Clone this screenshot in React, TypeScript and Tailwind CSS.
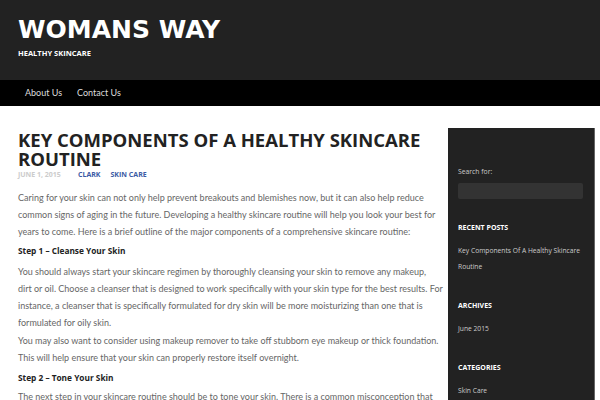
const paragraphs: { kind: "p" | "h"; lines: string[] }[] = [
  {
    kind: "p",
    lines: [
      "Caring for your skin can not only help prevent breakouts and blemishes now, but it can also help reduce",
      "common signs of aging in the future. Developing a healthy skincare routine will help you look your best for",
      "years to come. Here is a brief outline of the major components of a comprehensive skincare routine:",
    ],
  },
  { kind: "h", lines: ["Step 1 – Cleanse Your Skin"] },
  {
    kind: "p",
    lines: [
      "You should always start your skincare regimen by thoroughly cleansing your skin to remove any makeup,",
      "dirt or oil. Choose a cleanser that is designed to work specifically with your skin type for the best results. For",
      "instance, a cleanser that is specifically formulated for dry skin will be more moisturizing than one that is",
      "formulated for oily skin.",
    ],
  },
  {
    kind: "p",
    lines: [
      "You may also want to consider using makeup remover to take off stubborn eye makeup or thick foundation.",
      "This will help ensure that your skin can properly restore itself overnight.",
    ],
  },
  { kind: "h", lines: ["Step 2 – Tone Your Skin"] },
  {
    kind: "p",
    lines: [
      "The next step in your skincare routine should be to tone your skin. There is a common misconception that",
      "toners are only for oily skin.",
    ],
  },
];

export default function App() {
  const body = { fontFamily: "Lato, 'Liberation Sans', sans-serif" };
  const head = { fontFamily: "'DejaVu Sans', sans-serif" };
  const bold = { fontFamily: "'Open Sans', 'DejaVu Sans', sans-serif" };

  return (
    <div className="w-[600px] h-[400px] overflow-hidden bg-white">
      <header className="bg-[#222222] h-[80px] px-[18px] pt-[17px]">
        <h1 className="text-white font-bold text-[25px] leading-[25px]" style={head}>
          WOMANS WAY
        </h1>
        <p className="mt-[6px] text-white font-bold text-[7.5px] leading-[10px]" style={bold}>
          HEALTHY SKINCARE
        </p>
      </header>

      <nav className="bg-black h-[26px] flex items-center gap-[15px] px-[25px] text-[9px] text-[#dddddd]" style={body}>
        <span>About Us</span>
        <span>Contact Us</span>
      </nav>

      <main className="flex gap-[7px] pl-[18px] pt-[22px]">
        <article className="w-[423px] shrink-0 pt-[2px] text-[#666666]" style={body}>
          <h2 className="text-[#222222] font-bold text-[18.5px] leading-[19px] w-[414px]" style={bold}>
            KEY COMPONENTS OF A HEALTHY SKINCARE ROUTINE
          </h2>
          <div className="mt-[2px] flex text-[7px] leading-[9px] font-bold" style={bold}>
            <span className="text-[#cccccc] w-[60px]">JUNE 1, 2015</span>
            <span className="text-[#3b5ba5] mr-[10px]">CLARK</span>
            <span className="text-[#3b5ba5]">SKIN CARE</span>
          </div>
          <div className="mt-[10px] text-[9px] leading-[17px] whitespace-nowrap">
            {paragraphs.map((block, i) =>
              block.kind === "h" ? (
                <h3
                  key={i}
                  className={`${i === 1 ? "mt-[2px]" : "mt-[3px]"} text-[#222222] font-bold text-[8.3px]`}
                  style={bold}
                >
                  {block.lines[0]}
                </h3>
              ) : (
                <p key={i} className={i === 0 ? "" : i === 3 ? "mt-[1px]" : i === 2 ? "mt-[4px]" : "mt-[2px]"}>
                  {block.lines.map((line, j) => (
                    <span key={j} className="block">
                      {line}
                    </span>
                  ))}
                </p>
              )
            )}
          </div>
        </article>

        <aside className="w-[147px] h-[300px] shrink-0 bg-[#222222] border-r border-[#666666] pl-[10px] pr-[8px] pt-[38px]" style={bold}>
          <p className="text-[#cccccc] text-[6.8px] leading-[12px]">Search for:</p>
          <div className="mt-[5px] mr-[3px] h-[16px] bg-[#333333] rounded-[2px]" />

          <h4 className="mt-[23px] text-white font-bold text-[7px] leading-[12px]">RECENT POSTS</h4>
          <p className="mt-[9px] text-[#cccccc] text-[6.7px] leading-[16px] whitespace-nowrap">
            Key Components Of A Healthy Skincare
            <br />
            Routine
          </p>

          <h4 className="mt-[25px] text-white font-bold text-[7px] leading-[12px]">ARCHIVES</h4>
          <p className="mt-[9px] text-[#cccccc] text-[6.7px] leading-[16px]">June 2015</p>

          <h4 className="mt-[25px] text-white font-bold text-[7px] leading-[12px]">CATEGORIES</h4>
          <p className="mt-[9px] text-[#cccccc] text-[6.7px] leading-[16px]">Skin Care</p>
        </aside>
      </main>
    </div>
  );
}
